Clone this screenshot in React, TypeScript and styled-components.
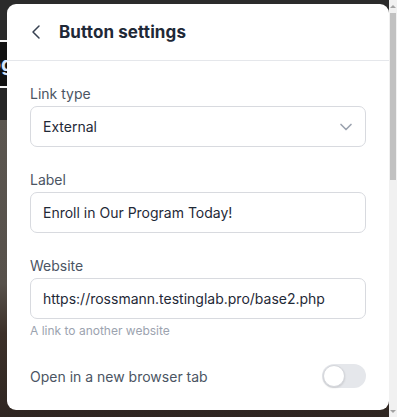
import styled, { createGlobalStyle } from "styled-components"
import { ChevronLeft, ChevronDown } from "lucide-react"

const GlobalStyle = createGlobalStyle`
  html, body {
    margin: 0;
    padding: 0;
    height: 100%;
    overflow: hidden;
  }
  body {
    font-family: Inter, "Noto Sans", "Liberation Sans", sans-serif;
    -webkit-font-smoothing: antialiased;
  }
`

const Viewport = styled.div`
  display: flex;
  width: 100vw;
  height: 100vh;
`

const Stage = styled.div`
  position: relative;
  flex: 1;
  overflow: hidden;
  display: flex;
  flex-direction: column;
  background: #2a2420;
`

/* page that sits behind the dialog */
const TopBand = styled.div`
  height: 40px;
  background: #2b2b2b;
`

const NavBand = styled.div`
  height: 44px;
  background: #111111;
  border-top: 2px solid #f4f4f4;
  border-bottom: 2px solid #f4f4f4;
  display: flex;
  align-items: center;
  overflow: hidden;
`

const NavLink = styled.span`
  margin-left: -30px;
  color: #d6e6ff;
  font-size: 20px;
  font-weight: 700;
  white-space: nowrap;
`

const DarkBand = styled.div`
  height: 32px;
  background: #262626;
`

const Hero = styled.div`
  flex: 1;
  background: linear-gradient(180deg, #5b5650 0%, #57514b 55%, #3c3029 72%, #2f2621 100%);
`

const Panel = styled.section`
  position: absolute;
  top: 4px;
  left: 7px;
  right: 0;
  bottom: 7px;
  background: #ffffff;
  border-radius: 9px;
  display: flex;
  flex-direction: column;
  overflow: hidden;
`

const Header = styled.header`
  height: 56px;
  flex-shrink: 0;
  display: flex;
  align-items: center;
  gap: 11px;
  padding-left: 17px;
  border-bottom: 1px solid #e5e7eb;
`

const BackButton = styled.button`
  display: flex;
  padding: 0;
  border: 0;
  background: none;
  color: #374151;
  cursor: pointer;
`

const Title = styled.h2`
  margin: 0;
  font-size: 17px;
  font-weight: 700;
  color: #1f2937;
  letter-spacing: 0.1px;
`

const Body = styled.div`
  padding: 23px 23px 0;
  display: flex;
  flex-direction: column;
  gap: 23px;
`

const Field = styled.div`
  display: flex;
  flex-direction: column;
`

const Label = styled.label`
  font-size: 14px;
  line-height: 20px;
  color: #4b5563;
  margin-bottom: 2px;
`

const Control = styled.div`
  height: 41px;
  box-sizing: border-box;
  border: 1px solid #d8dadf;
  border-radius: 7px;
  display: flex;
  align-items: center;
  justify-content: space-between;
  padding: 0 9px 0 12px;
  font-size: 14px;
  color: #1f2937;
  white-space: nowrap;
  overflow: hidden;
`

const Caret = styled.span`
  display: flex;
  color: #9ca3af;
`

const Hint = styled.div`
  margin-top: 4px;
  font-size: 12px;
  line-height: 16px;
  color: #9ca3af;
`

const ToggleRow = styled.div`
  margin-top: 2px;
  height: 24px;
  display: flex;
  align-items: center;
  justify-content: space-between;
  font-size: 14px;
  color: #4b5563;
`

const Switch = styled.button<{ $on?: boolean }>`
  width: 44px;
  height: 24px;
  padding: 1px;
  border: 0;
  border-radius: 12px;
  background: ${(p) => (p.$on ? "#2563eb" : "#e5e7eb")};
  display: flex;
  justify-content: ${(p) => (p.$on ? "flex-end" : "flex-start")};
  align-items: center;
`

const Knob = styled.span`
  width: 22px;
  height: 22px;
  box-sizing: border-box;
  border-radius: 50%;
  background: #ffffff;
  border: 1px solid #d4d6db;
  box-shadow: 0 1px 2px rgba(0, 0, 0, 0.12);
`

/* window scrollbar */
const ScrollRail = styled.div`
  width: 8px;
  background: #f1f1f1;
  display: flex;
  flex-direction: column;
`

const ScrollArrow = styled.div<{ $down?: boolean }>`
  height: 12px;
  flex-shrink: 0;
  display: flex;
  justify-content: center;
  align-items: center;
  &::before {
    content: "";
    border-left: 3px solid transparent;
    border-right: 3px solid transparent;
    ${(p) => (p.$down ? "border-top" : "border-bottom")}: 3px solid #a3a3a3;
  }
`

const ScrollThumb = styled.div`
  height: 167px;
  margin: 1px 1px 0;
  background: #c1c1c1;
`

const Spacer = styled.div`
  flex: 1;
`

export default function App() {
  return (
    <>
      <GlobalStyle />
      <Viewport>
        <Stage>
          <TopBand />
          <NavBand>
            <NavLink>Blog</NavLink>
          </NavBand>
          <DarkBand />
          <Hero />

          <Panel>
            <Header>
              <BackButton aria-label="Back">
                <ChevronLeft size={24} strokeWidth={1.5} />
              </BackButton>
              <Title>Button settings</Title>
            </Header>
            <Body>
              <Field>
                <Label>Link type</Label>
                <Control>
                  External
                  <Caret>
                    <ChevronDown size={20} strokeWidth={2} />
                  </Caret>
                </Control>
              </Field>
              <Field>
                <Label>Label</Label>
                <Control>Enroll in Our Program Today!</Control>
              </Field>
              <Field>
                <Label>Website</Label>
                <Control>https://rossmann.testinglab.pro/base2.php</Control>
                <Hint>A link to another website</Hint>
              </Field>
              <ToggleRow>
                Open in a new browser tab
                <Switch aria-label="Open in a new browser tab">
                  <Knob />
                </Switch>
              </ToggleRow>
            </Body>
          </Panel>
        </Stage>
        <ScrollRail>
          <ScrollArrow />
          <ScrollThumb />
          <Spacer />
          <ScrollArrow $down />
        </ScrollRail>
      </Viewport>
    </>
  )
}
